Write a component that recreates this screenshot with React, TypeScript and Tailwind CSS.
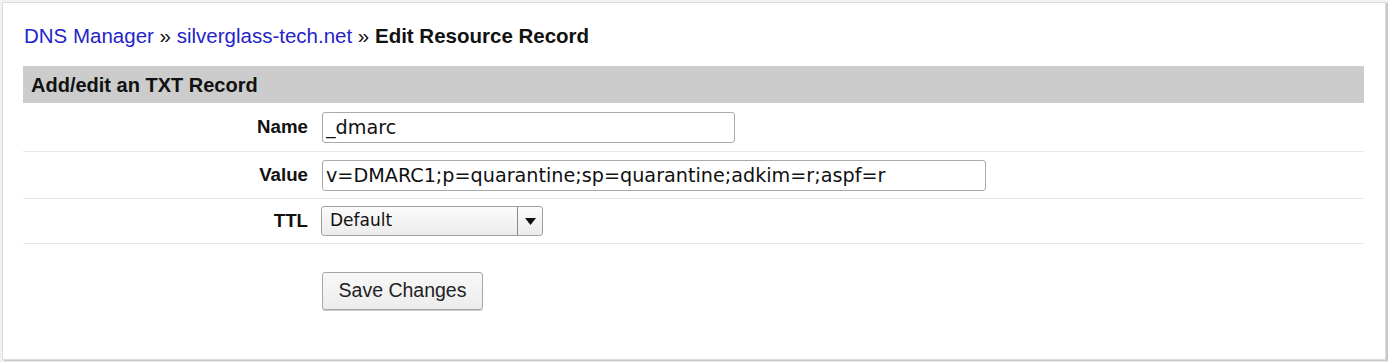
import React from "react";

const sans = "font-['Liberation_Sans',Arial,sans-serif]";
const dejavu = "font-['DejaVu_Sans',Verdana,sans-serif]";

function Row({ label, children }: { label: string; children: React.ReactNode }) {
  return (
    <div className="flex items-center border-b border-[#e8e8e8]">
      <div className={`w-[285px] shrink-0 text-right text-[18.7px] font-bold text-[#111] ${sans}`}>{label}</div>
      <div className="ml-[14px] flex items-center">{children}</div>
    </div>
  );
}

export default function App() {
  return (
    <div className="h-[362px] w-[1388px] bg-[#f2f2f2] pl-[2px] pr-[2px] pt-[2px] pb-[1px]">
      <div className="flex h-[358px] flex-col border border-[#dddddd] bg-white pl-[20px] pr-[21px] pt-[21px] shadow-[2px_1px_1px_#c8c8c8]">
        {/* breadcrumb */}
        <div className={`pl-[1px] text-[20.5px] leading-[23px] text-[#111] ${sans}`}>
          <a href="#" className="text-[#2424c8]">DNS Manager</a>
          <span> » </span>
          <a href="#" className="text-[#2424c8]">silverglass-tech.net</a>
          <span> » </span>
          <span className="font-bold">Edit Resource Record</span>
        </div>

        <div className="mt-[19px]">
          <div className={`flex h-[37px] items-center bg-[#cccccc] px-[8px] text-[20px] font-bold text-[#111] ${sans}`}>
            Add/edit an TXT Record
          </div>

          <Row label="Name">
            <div className="flex h-[48px] items-center">
              <input
                type="text"
                defaultValue="_dmarc"
                className={`h-[31px] w-[413px] rounded-[3px] border border-[#a9a9a9] bg-white px-[3px] text-[19.2px] text-[#111] outline-none ${dejavu}`}
              />
            </div>
          </Row>

          <Row label="Value">
            <div className="flex h-[46px] items-center">
              <input
                type="text"
                defaultValue="v=DMARC1;p=quarantine;sp=quarantine;adkim=r;aspf=r"
                className={`h-[31px] w-[664px] rounded-[3px] border border-[#a9a9a9] bg-white px-[3px] text-[19.2px] text-[#111] outline-none ${dejavu}`}
              />
            </div>
          </Row>

          <Row label="TTL">
            <div className="-ml-[1px] flex h-[44px] items-center">
              <div className="flex h-[30px] w-[222px] items-stretch rounded-[3px] border border-[#a0a0a0] bg-gradient-to-b from-[#fbfbfb] to-[#ececec]">
                <span className={`flex flex-1 items-center px-[8px] text-[17px] text-[#111] ${dejavu}`}>Default</span>
                <span className="flex w-[25px] items-center justify-center border-l border-[#8a8a8a]">
                  <svg width="11" height="7" viewBox="0 0 11 7">
                    <path d="M0 0h11L5.5 7z" fill="#111" />
                  </svg>
                </span>
              </div>
            </div>
          </Row>

          <div className="flex pl-[299px] pt-[28px]">
            <button
              className={`h-[38px] w-[161px] rounded-[3px] border border-[#a6a6a6] bg-gradient-to-b from-[#f8f8f8] to-[#ececec] text-[19.5px] text-[#222] shadow-[0_1px_0_#d0d0d0] ${sans}`}
            >
              Save Changes
            </button>
          </div>
        </div>
      </div>
    </div>
  );
}
